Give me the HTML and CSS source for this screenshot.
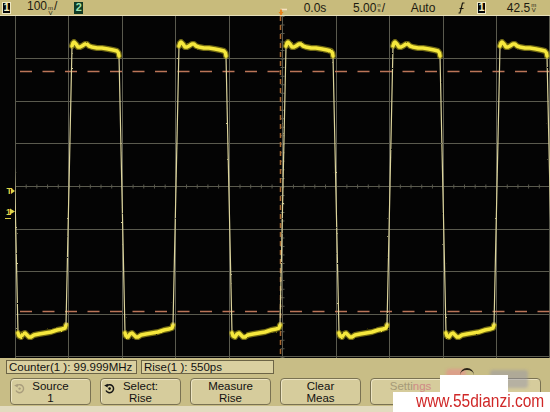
FILE: index.html
```html
<!DOCTYPE html>
<html lang="en">
  <head>
    <meta charset="UTF-8" />
    <meta name="viewport" content="width=device-width, initial-scale=1.0" />
    <title>Scope - Rise Time</title>
    <link rel="stylesheet" href="styles.css">
  </head>
  <body>
    <div class="scope">
      <div class="status">
        <div class="status-left">
          <span class="chan chan-1">1</span>
          <span class="scale">100<span class="unit"><i>m</i><i>V</i></span>/</span>
          <span class="chan chan-2">2</span>
        </div>
        <span class="trig-pos">
          <svg width="10" height="15" viewBox="0 0 10 15">
            <path d="M2.5 9.5 H9" stroke="#f6e2c0" stroke-width="1.6" fill="none" />
            <path d="M3 9.5 V15" stroke="#e8801a" stroke-width="1.8" fill="none" />
            <path d="M0.5 12 L3 15 L5.5 12 Z" fill="#e8801a" />
          </svg>
        </span>
        <span class="field">0.0s</span>
        <span class="field">5.00<span class="unit"><i>n</i><i>s</i></span>/</span>
        <span class="field">Auto</span>
        <span class="field field-trig">
          <svg width="7" height="12" viewBox="0 0 7 12">
            <path d="M0.5 11 H2 L4.5 1 H6.5 M1.5 6.5 H5.5" stroke="#1c1a10" stroke-width="1.2" fill="none" />
          </svg>
          <span class="chan chan-1">1</span>
        </span>
        <span class="field field-last">42.5<span class="unit"><i>m</i><i>V</i></span></span>
      </div>

      <div class="screen">
        <svg width="550" height="342" viewBox="0 0 550 342">
          <defs>
            <clipPath id="grat"><rect x="15" y="0" width="535" height="342" /></clipPath>
            <filter id="fuzz" filterUnits="userSpaceOnUse" x="0" y="0" width="550" height="342">
              <feTurbulence type="fractalNoise" baseFrequency="0.8" numOctaves="1" seed="4" />
              <feDisplacementMap in="SourceGraphic" scale="2" xChannelSelector="R" yChannelSelector="G" />
            </filter>
            <g id="cycle">
              <path class="edge" d="M-6 309 L0 30 M47 40 L53 317" />
              <path class="glow" d="M0 30 L1 27 L2 26 L4 28 L6 31 L8 31 L10 30 L13 28 L15 28 L17 30 L20 31 L25 32 L30 32 L36 33 L41 34 L45 35 L46.5 37 L47 40" />
              <path class="glow" d="M53 317 L54 320 L56 321 L58 318 L60 317 L62 319 L64 321 L66 321 L69 319 L74 318 L80 317 L86 316 L92 314 L97 313 L100 312 L101 309" />
              <path class="level" d="M0 30 L1 27 L2 26 L4 28 L6 31 L8 31 L10 30 L13 28 L15 28 L17 30 L20 31 L25 32 L30 32 L36 33 L41 34 L45 35 L46.5 37 L47 40" />
              <path class="level" d="M53 317 L54 320 L56 321 L58 318 L60 317 L62 319 L64 321 L66 321 L69 319 L74 318 L80 317 L86 316 L92 314 L97 313 L100 312 L101 309" />
            </g>
          </defs>

          <rect class="bg" width="550" height="342" />
          <path class="grid" d="M15.5 0V342 M68.5 0V342 M122.5 0V342 M175.5 0V342 M229.5 0V342 M282.5 0V342 M336.5 0V342 M389.5 0V342 M443.5 0V342 M496.5 0V342 M549.5 0V342
                                  M15 42.5H550 M15 85.5H550 M15 127.5H550 M15 170.5H550 M15 213.5H550 M15 255.5H550 M15 298.5H550 M15 340.5H550" />
          <line class="ticks" x1="15" y1="170.5" x2="550" y2="170.5" stroke-dasharray="1 9.69" />
          <line class="ticks" x1="282.5" y1="0" x2="282.5" y2="342" stroke-dasharray="1 7.52" />

          <line class="level-mark" x1="15" y1="55.5" x2="550" y2="55.5" />
          <line class="level-mark" x1="15" y1="295.5" x2="550" y2="295.5" />
          <line class="trig-line" x1="280.5" y1="0" x2="280.5" y2="342" />

          <g clip-path="url(#grat)">
            <g filter="url(#fuzz)">
              <use href="#cycle" x="-35" />
              <use href="#cycle" x="72" />
              <use href="#cycle" x="179" />
              <use href="#cycle" x="286" />
              <use href="#cycle" x="393" />
              <use href="#cycle" x="500" />
            </g>
          </g>

          <text class="mark" x="6.5" y="178">T</text>
          <path class="mark-arrow" d="M11 172 L15 175 L11 178 Z" />
          <text class="mark" x="6" y="199">1</text>
          <path class="mark-arrow" d="M10 192.5 L15 195.5 L10 198.5 Z" />
          <path d="M5 202.5 H11" stroke="#d8cc48" stroke-width="1" />
        </svg>
      </div>

      <div class="panel">
        <div class="readouts">
          <div class="readout readout-counter">Counter(1 ): 99.999MHz</div>
          <div class="readout readout-rise">Rise(1 ): 550ps</div>
        </div>
        <div class="softkeys">
          <div class="key">
            <svg class="key-icon is-dim" width="11" height="11" viewBox="0 0 11 11">
              <path d="M3 2.6 A4 4 0 1 1 2 7.5" stroke="#a99d7c" stroke-width="1.4" fill="none" />
              <path d="M0.2 2.4 L3.8 0.8 L3.6 4.6 Z" fill="#a99d7c" />
              <circle cx="5.6" cy="5.6" r="1.2" fill="#a99d7c" />
            </svg>
            <span>Source</span><span>1</span>
          </div>
          <div class="key">
            <svg class="key-icon" width="11" height="11" viewBox="0 0 11 11">
              <path d="M3 2.6 A4 4 0 1 1 2 7.5" stroke="#141414" stroke-width="1.5" fill="none" />
              <path d="M0.2 2.4 L3.8 0.8 L3.6 4.6 Z" fill="#141414" />
              <circle cx="5.6" cy="5.6" r="1.3" fill="#141414" />
            </svg>
            <span>Select:</span><span>Rise</span>
          </div>
          <div class="key"><span>Measure</span><span>Rise</span></div>
          <div class="key"><span>Clear</span><span>Meas</span></div>
          <div class="key key-top is-dim"><span>Setti<span class="wm-tint">ngs</span></span></div>
          <div class="key is-dim"></div>
        </div>

        <div class="wm-blob"></div>
        <div class="wm-arc"></div>
        <div class="wm-logo"></div>
        <div class="wm-tab"></div>
        <div class="wm-box"><span>www.55dianzi.com</span></div>
      </div>
    </div>
  </body>
</html>
```

FILE: styles.css
```css
* {
  margin: 0;
  padding: 0;
  box-sizing: border-box;
}
body {
  background: #000;
  font-family: "Liberation Sans", Arial, sans-serif;
}
.scope {
  width: 550px;
  height: 412px;
  display: flex;
  flex-direction: column;
  overflow: hidden;
}

/* top status line */
.status {
  height: 16px;
  flex: 0 0 16px;
  background: #c8bb7c;
  border-bottom: 1px solid #e6dfba;
  display: flex;
  align-items: center;
  font-size: 12px;
  line-height: 1;
  color: #1c1a10;
}
.status-left {
  flex: 0 0 278px;
  display: flex;
  align-items: center;
}
.chan {
  display: inline-flex;
  align-items: center;
  justify-content: center;
  width: 9px;
  height: 12px;
  font-size: 11px;
  font-weight: bold;
}
.chan-1 {
  background: #050505;
  color: #f4eec0;
  border: 1px solid #eee8c4;
}
.status-left .chan-1 {
  margin-left: 2px;
}
.scale {
  margin-left: 16px;
}
.chan-2 {
  background: #103a24;
  color: #9ee2b0;
  margin-left: 17px;
}
.trig-pos {
  flex: 0 0 10px;
  height: 15px;
}
.trig-pos svg {
  display: block;
}
.field {
  flex: 0 0 54px;
  display: flex;
  align-items: center;
  justify-content: center;
}
.field-trig {
  flex: 0 0 42px;
  gap: 12px;
  padding-left: 2px;
}
.field-last {
  flex: 1;
  padding-left: 2px;
}
.unit {
  display: inline-flex;
  flex-direction: column;
  align-items: center;
  font-size: 6px;
  line-height: 5px;
  margin: 0 1px;
}
.unit i {
  font-style: normal;
}

/* graticule */
.screen {
  flex: 0 0 342px;
  background: #040404;
}
.screen svg {
  display: block;
}
.bg {
  fill: #040404;
}
.grid {
  stroke: #5a5a4e;
  stroke-width: 1;
  fill: none;
}
.ticks {
  stroke: #5a5a4e;
  stroke-width: 4;
}
.level-mark {
  stroke: #bb7558;
  stroke-width: 1.6;
  stroke-dasharray: 12 10.5;
  stroke-dashoffset: -5;
}
.trig-line {
  stroke: #a8662c;
  stroke-width: 1.5;
  stroke-dasharray: 5 4;
}
.edge {
  stroke: #dcd49c;
  stroke-width: 1.2;
  fill: none;
}
.glow {
  stroke: #b8aa1c;
  stroke-width: 6;
  stroke-linejoin: round;
  stroke-linecap: round;
  fill: none;
  opacity: 0.6;
}
.level {
  stroke: #f6e83e;
  stroke-width: 3.5;
  stroke-linejoin: round;
  stroke-linecap: round;
  fill: none;
}
.mark {
  fill: #e2d64a;
  font-family: "Liberation Sans", Arial, sans-serif;
  font-size: 9px;
  font-weight: bold;
}
.mark-arrow {
  fill: #e2d64a;
}

/* bottom panel */
.panel {
  flex: 1;
  position: relative;
  background: #c8bd86;
  box-shadow: inset 0 -6px 0 #e2dbbf;
  padding-top: 2px;
  font-size: 11.5px;
  color: #111;
}
.readouts {
  display: flex;
  gap: 4px;
  padding-left: 6px;
  height: 14px;
}
.readout {
  border: 1px solid #6c6446;
  background: #dad0a0;
  line-height: 12px;
  padding: 0 2px;
  white-space: nowrap;
}
.readout-counter {
  width: 131px;
}
.readout-rise {
  width: 133px;
}
.softkeys {
  display: flex;
  gap: 9px;
  padding-left: 10px;
  margin-top: 4px;
}
.key {
  position: relative;
  width: 81px;
  height: 27px;
  flex: 0 0 81px;
  border: 1px solid #7a7252;
  border-radius: 4px;
  background: #d6cc9c;
  box-shadow: inset 1px 1px 0 #ece4c2;
  line-height: 12px;
  text-align: center;
  display: flex;
  flex-direction: column;
  justify-content: center;
}
.key.is-dim {
  color: #a69a78;
}
.key-top {
  justify-content: flex-start;
  padding-top: 2px;
  line-height: 11px;
}
.key-icon {
  position: absolute;
  left: 3px;
  top: 4px;
}

/* site watermark pasted over the capture */
.wm-tint {
  color: #d08a86;
}
.wm-box {
  position: absolute;
  left: 393px;
  top: 34px;
  width: 157px;
  height: 20px;
  background: #fff;
  color: #d02828;
  font-size: 18px;
  line-height: 18px;
  padding-left: 23px;
  white-space: nowrap;
}
.wm-box span {
  display: inline-block;
  transform: scaleX(0.86);
  transform-origin: left center;
}
.wm-tab {
  position: absolute;
  left: 440px;
  top: 17px;
  width: 68px;
  height: 18px;
  background: #fff;
}
.wm-blob {
  position: absolute;
  left: 446px;
  top: 11px;
  width: 20px;
  height: 8px;
  border-radius: 4px;
  background: rgba(232, 140, 140, 0.6);
  filter: blur(1.5px);
}
.wm-arc {
  position: absolute;
  left: 460px;
  top: 10px;
  width: 14px;
  height: 8px;
  border-top: 2px solid #2a2418;
  border-radius: 8px 8px 0 0;
}
.wm-logo {
  position: absolute;
  left: 490px;
  top: 12px;
  width: 38px;
  height: 18px;
  border-radius: 3px;
  background: rgba(150, 150, 168, 0.5);
  filter: blur(1.5px);
}
```
